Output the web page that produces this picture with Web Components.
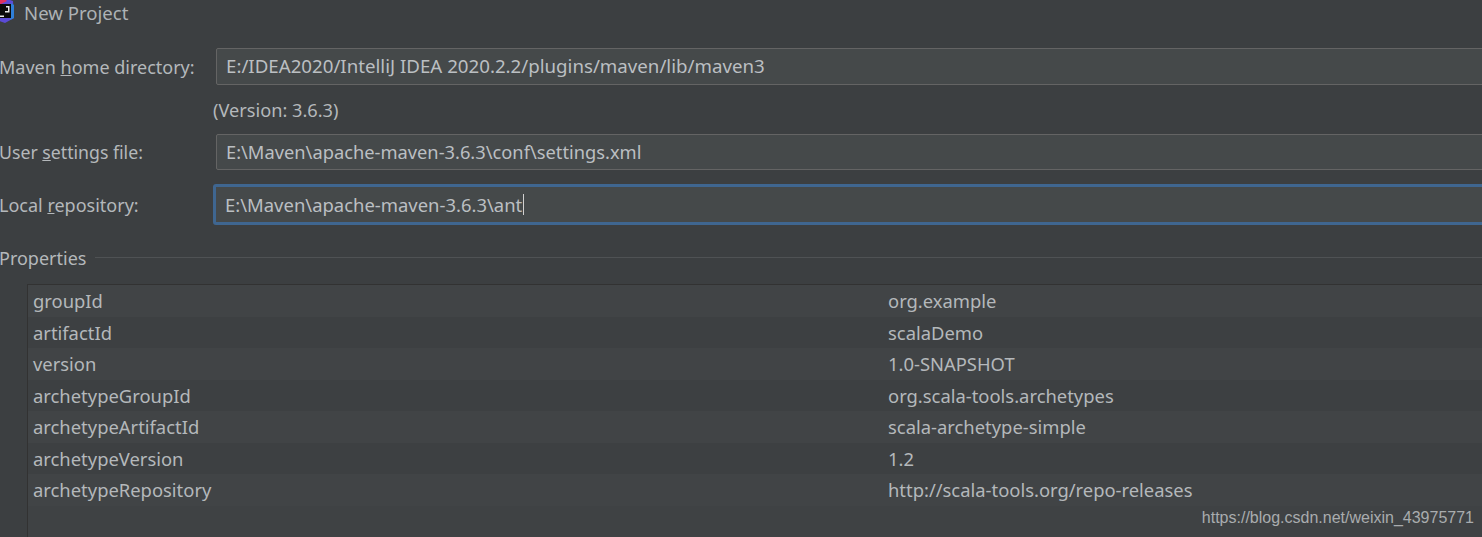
<!DOCTYPE html>
<html><head><meta charset="utf-8">
<style>
html,body{margin:0;padding:0;background:#3c3f41;height:537px;overflow:hidden}
body{font-family:"Noto Sans","Open Sans",sans-serif;color:#b4b8bb;font-size:18px}
</style></head><body>
<app-dialog>
  <title-bar>New Project</title-bar>
  <form-row style="--h:37px;--mt:23px"><span slot="label">Maven <u>h</u>ome directory:</span><text-field>E:/IDEA2020/IntelliJ IDEA 2020.2.2/plugins/maven/lib/maven3</text-field></form-row>
  <version-note>(Version: 3.6.3)</version-note>
  <form-row style="--h:36px;--mt:13px;--fs:18.3px"><span slot="label" style="font-size:17.7px">User <u>s</u>ettings file:</span><text-field>E:\Maven\apache-maven-3.6.3\conf\settings.xml</text-field></form-row>
  <form-row style="--h:41px;--mt:14px;--fs:18.45px"><span slot="label">Local <u>r</u>epository:</span><text-field focused>E:\Maven\apache-maven-3.6.3\ant</text-field></form-row>
  <section-title>Properties</section-title>
  <prop-table>
    <prop-row name="groupId" value="org.example"></prop-row>
    <prop-row name="artifactId" value="scalaDemo" alt></prop-row>
    <prop-row name="version" value="1.0-SNAPSHOT"></prop-row>
    <prop-row name="archetypeGroupId" value="org.scala-tools.archetypes" alt></prop-row>
    <prop-row name="archetypeArtifactId" value="scala-archetype-simple"></prop-row>
    <prop-row name="archetypeVersion" value="1.2" alt></prop-row>
    <prop-row name="archetypeRepository" value="http://scala-tools.org/repo-releases"></prop-row>
  </prop-table>
  <water-mark>https://blog.csdn.net/weixin_43975771</water-mark>
</app-dialog>
<script>
function def(name, css, html){
  customElements.define(name, class extends HTMLElement{
    constructor(){super();const r=this.attachShadow({mode:'open'});r.innerHTML='<style>'+css+'</style>'+html;}
  });
}
def('app-dialog',':host{display:flex;flex-direction:column;width:1482px;height:537px;position:relative;overflow:hidden;background:#3c3f41}','<slot></slot>');
def('title-bar',':host{display:flex;align-items:center;gap:10px;height:25px;font-size:18.6px;color:#adb2b5;margin-left:-6px;line-height:25px}svg{flex:none;margin-bottom:1px}',
 '<svg width="20" height="24" viewBox="0 0 20 24"><polygon points="3,1 10,-2 19,1 20,18 11,23 3,20" fill="#5b4bd6"/><polygon points="3,1 10,-2 13,1 7,4 3,4" fill="#e0305f"/><polygon points="17,3 20,5 20,18 16,20" fill="#2f7fd8"/><rect x="6" y="4" width="11" height="14" fill="#0a0a0a"/><rect x="6" y="15.500" width="4" height="1.500" fill="#e8e8e8"/><path d="M12 6h3.500v6.500H11V11h3V7.500h-2z" fill="#e8e8e8"/></svg><slot></slot>');
def('form-row',':host{display:flex;align-items:center;height:var(--h);margin-top:var(--mt)}.l{flex:0 0 216px;white-space:nowrap;margin-left:-1px;margin-right:1px}::slotted(text-field){flex:1}','<div class="l"><slot name="label"></slot></div><slot></slot>');
def('text-field',`:host{display:flex;align-items:center;box-sizing:border-box;height:100%;padding-left:9px;padding-bottom:2px;margin-right:-6px;background:#45494a;border:1px solid #646464;border-radius:2px;color:#bbbfc2;white-space:nowrap;font-size:var(--fs,18.7px)}
:host([focused]){margin-left:-3px;padding-left:9px;padding-bottom:0;border:3px solid #3f6690;border-radius:3px;flex:1}
i{display:none;width:1px;height:21px;background:#d0d0d0;margin-left:1px}:host([focused]) i{display:block}`,'<slot></slot><i></i>');
def('version-note',':host{display:block;margin:14px 0 0 213px;height:22px;line-height:22px;font-size:18.2px}','<slot></slot>');
def('section-title',':host{display:flex;align-items:center;gap:9px;height:24px;margin-top:21px;margin-left:-1px}i{flex:1;height:1px;background:#4f5254;margin-top:-1px}','<slot></slot><i></i>');
def('prop-table',':host{display:block;margin:14px 0 0 27px;flex:1;border-top:1px solid #323232;border-left:1px solid #323232;background:#3f4244;font-size:18.4px}','<slot></slot>');
customElements.define('prop-row',class extends HTMLElement{
  constructor(){super();const r=this.attachShadow({mode:'open'});
  r.innerHTML=`<style>:host{display:grid;grid-template-columns:855px 1fr;align-items:center;height:31.5px;padding-left:5px;background:#414446;color:#b4b8bb}:host([alt]){background:#3d4042}</style><div></div><div></div>`;}
  connectedCallback(){const d=this.shadowRoot.querySelectorAll('div');d[0].textContent=this.getAttribute('name');d[1].textContent=this.getAttribute('value');}
});
def('water-mark',':host{position:absolute;right:8px;bottom:10px;font:16px "Liberation Sans",Arial,sans-serif;color:#a9acae}','<slot></slot>');
</script>
</body></html>
